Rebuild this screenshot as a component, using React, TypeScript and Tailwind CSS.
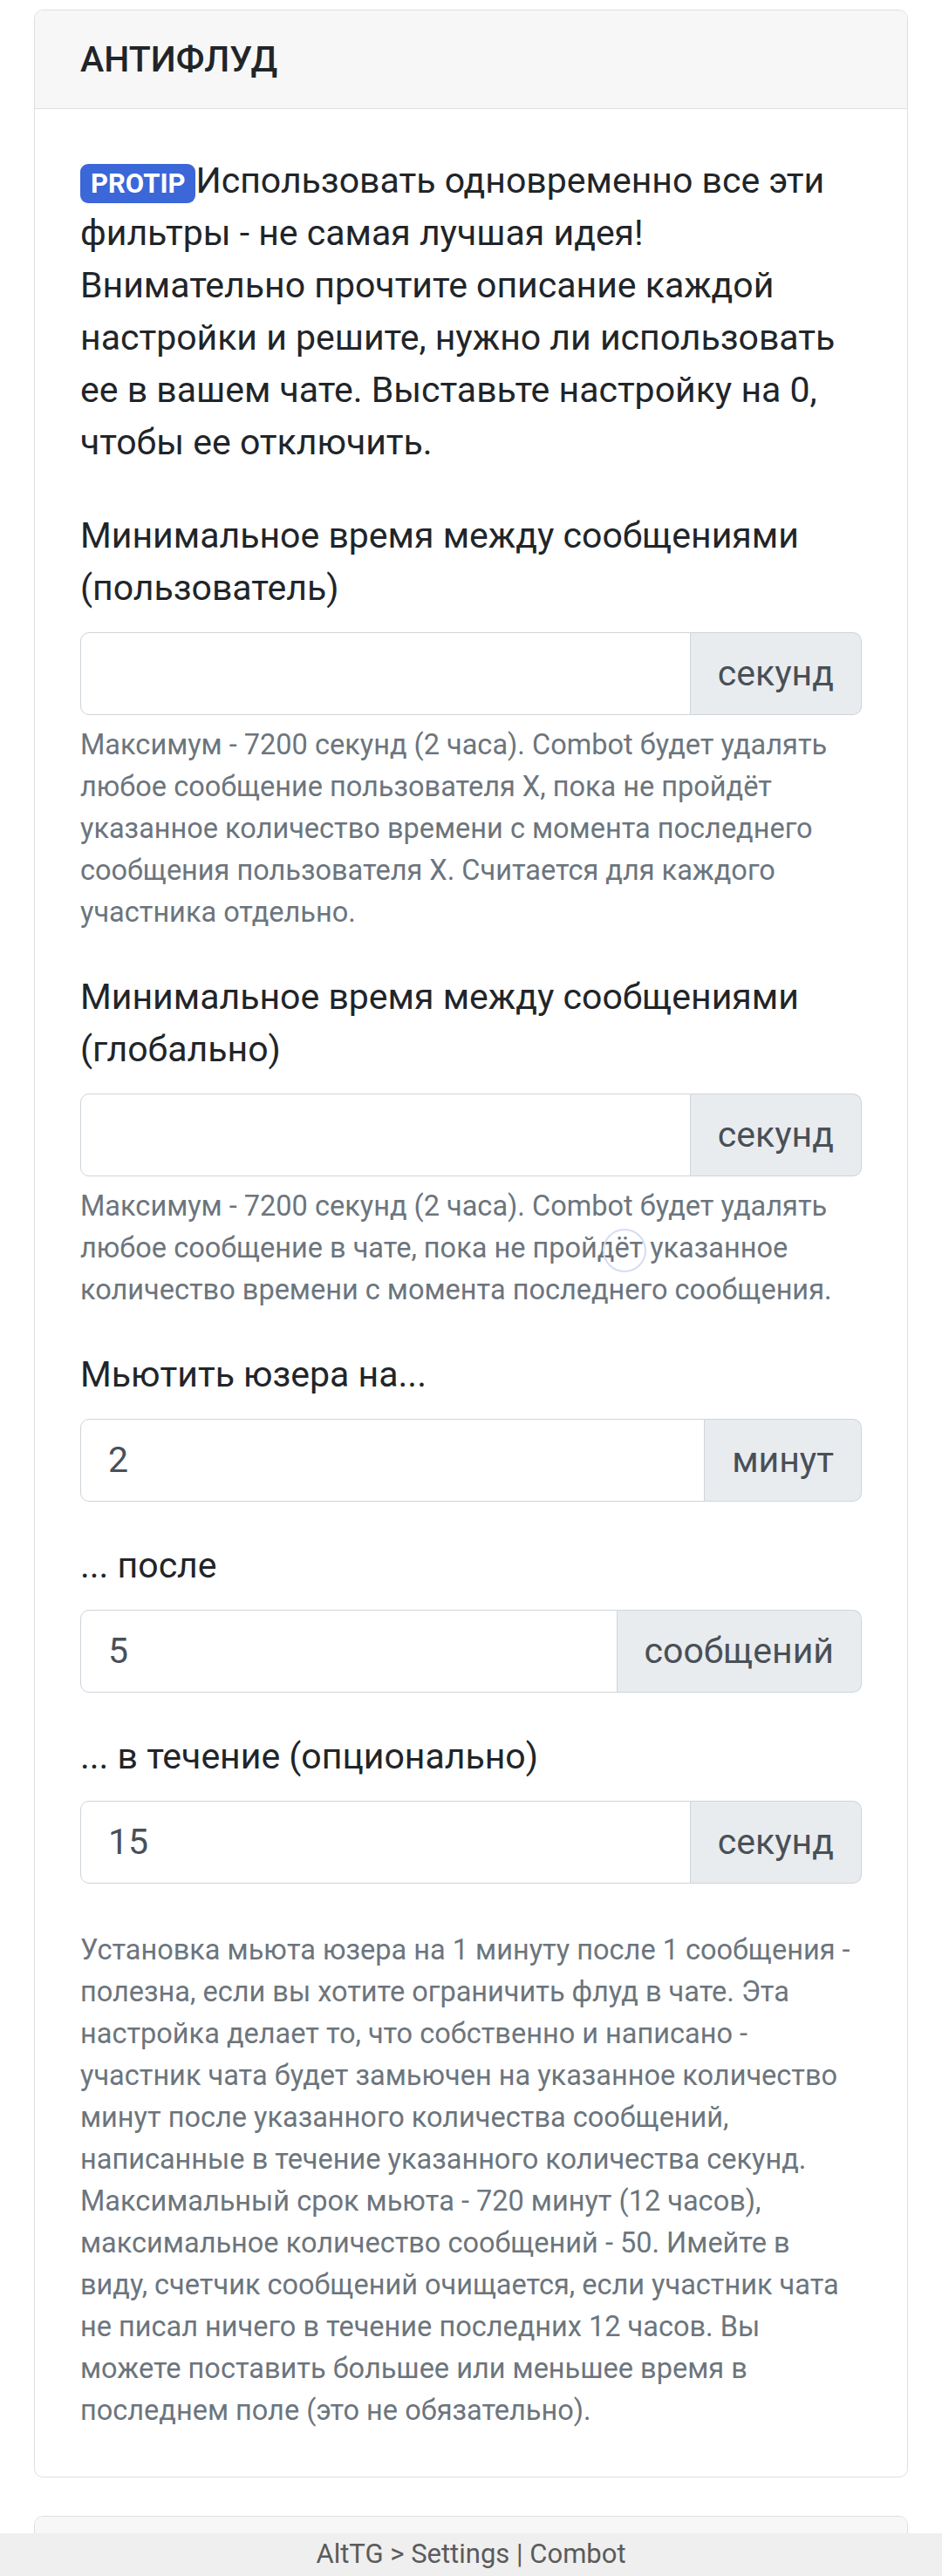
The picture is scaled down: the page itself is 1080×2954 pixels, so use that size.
import React from 'react'

interface FieldProps {
  label: React.ReactNode
  value?: string
  unit: string
  help?: React.ReactNode
}

function UnitInput({ value, unit }: { value?: string; unit: string }) {
  return (
    <div className="flex h-[95px]">
      <input
        type="text"
        defaultValue={value}
        className="min-w-0 flex-1 rounded-l-[10px] border border-[#ced4da] bg-white px-[31px] text-[41px] text-[#495057] outline-none"
      />
      <span className="flex items-center rounded-r-[10px] border border-l-0 border-[#ced4da] bg-[#e9ecef] px-[31px] text-[41px] text-[#495057]">
        {unit}
      </span>
    </div>
  )
}

function Field({ label, value, unit, help }: FieldProps) {
  return (
    <div className="mb-[43px]">
      <label className="mb-[21px] block text-[41px] leading-[60px] text-[#212529]">{label}</label>
      <UnitInput value={value} unit={unit} />
      {help}
    </div>
  )
}

export default function App() {
  return (
    <div className="min-h-[2954px] bg-white px-[39px] pt-[11px] font-[Roboto,sans-serif]">
      <div className="overflow-hidden rounded-[10px] border border-[#dfdfdf]">
        {/* Card header */}
        <div className="border-b border-[#dfdfdf] bg-[#f7f7f7] px-[52px] py-[31px]">
          <h5 className="text-[41px] font-medium leading-[50px] text-[#212529]">АНТИФЛУД</h5>
        </div>

        {/* Card body */}
        <div className="px-[52px] pt-[52px] pb-[52px]">
          <p className="mb-[47px] text-[41px] leading-[60px] text-[#212529]">
            <span className="inline-block rounded-[9px] bg-[#3b67d8] px-[12px] py-[7px] align-baseline text-[31px] font-bold leading-none text-white">
              PROTIP
            </span>
            Использовать одновременно все эти фильтры - не самая лучшая идея! Внимательно прочтите описание каждой
            настройки и решите, нужно ли использовать ее в вашем чате. Выставьте настройку на 0, чтобы ее отключить.
          </p>

          <Field
            label="Минимальное время между сообщениями (пользователь)"
            unit="секунд"
            help={
              <small className="mt-[10px] block text-[32.5px] leading-[48px] text-[#6c757d]">
                Максимум - 7200 секунд (2 часа). Combot будет удалять любое сообщение пользователя X, пока не пройдёт
                указанное количество времени с момента последнего сообщения пользователя X. Считается для каждого
                участника отдельно.
              </small>
            }
          />

          <Field
            label="Минимальное время между сообщениями (глобально)"
            unit="секунд"
            help={
              <small className="relative mt-[10px] block text-[32.5px] leading-[48px] text-[#6c757d]">
                Максимум - 7200 секунд (2 часа). Combot будет удалять любое сообщение в чате, пока не пройдёт указанное
                количество времени с момента последнего сообщения.
                <span className="pointer-events-none absolute top-[50px] left-[599px] h-[50px] w-[50px] rounded-full border-2 border-[#d6ddf0]" />
              </small>
            }
          />

          <Field label="Мьютить юзера на..." value="2" unit="минут" />
          <Field label="... после" value="5" unit="сообщений" />
          <Field label="... в течение (опционально)" value="15" unit="секунд" />

          <small className="mt-[52px] block text-[32.5px] leading-[48px] text-[#6c757d]">
            Установка мьюта юзера на 1 минуту после 1 сообщения - полезна, если вы хотите ограничить флуд в чате. Эта
            настройка делает то, что собственно и написано - участник чата будет замьючен на указанное количество минут
            после указанного количества сообщений, написанные в течение указанного количества секунд. Максимальный срок
            мьюта - 720 минут (12 часов), максимальное количество сообщений - 50. Имейте в виду, счетчик сообщений
            очищается, если участник чата не писал ничего в течение последних 12 часов. Вы можете поставить большее или
            меньшее время в последнем поле (это не обязательно).
          </small>
        </div>
      </div>

      {/* Next card, cut off by the bottom bar */}
      <div className="mt-[44px] overflow-hidden rounded-[10px] border border-[#dfdfdf]">
        <div className="h-[112px] bg-[#f7f7f7]" />
      </div>

      {/* Bottom bar */}
      <div className="fixed inset-x-0 bottom-0 flex h-[49px] items-center justify-center bg-[#efefef] text-[31px] text-[#5b5b5b]">
        AltTG &gt; Settings | Combot
      </div>
    </div>
  )
}
